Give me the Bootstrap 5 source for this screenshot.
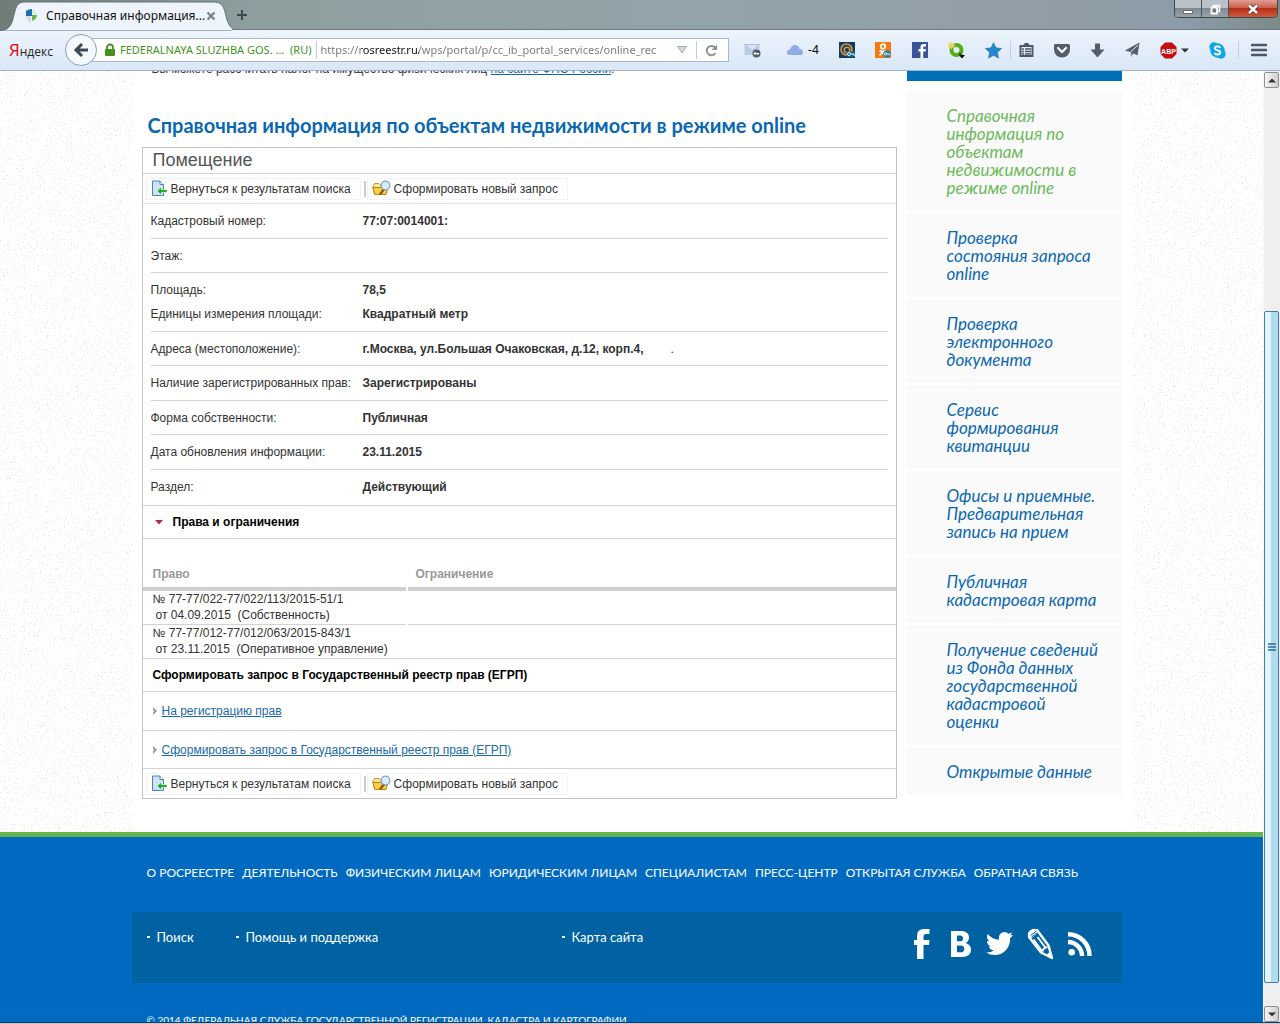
<!DOCTYPE html>
<html lang="ru">
<head>
<meta charset="utf-8">
<meta name="viewport" content="width=device-width, initial-scale=1">
<title>Справочная информация по объектам недвижимости в режиме online</title>
<link rel="stylesheet" href="https://cdn.jsdelivr.net/npm/bootstrap@5.3.0/dist/css/bootstrap.min.css">
<style>
:root{--ui:"Noto Sans","Open Sans",sans-serif;--site:Lato,"Open Sans",sans-serif;--line:#d3d3d3;--blue:#0b68b0}
body{font:12px/16px "Liberation Sans",Arial,sans-serif;color:#333;height:100vh;overflow:hidden;background:#fff}
button{font:inherit}
svg{display:block;flex:none}
.icon-btn{border:0;background:none;padding:0;color:#4d5a66}
/* browser frame */
.tabstrip{height:30px;background:linear-gradient(90deg,#6f7d78 0,#8f9f9f 20%,#93a3aa 55%,#929ea5 80%,#8b9ba8 93%,#7b8b86);border-bottom:1px solid #6b7b84;font-family:var(--ui);position:relative}
.tab-title{color:#111;font-size:12px}
.tab-shape{position:absolute;left:0;top:0}
.tab-body{position:relative;padding-left:24px;width:228px;padding-top:2px}
.tab-body .icon-btn{margin-left:1px}
.winbtns{height:18px;width:104px;border:1px solid #3f464c;border-top:0;border-radius:0 0 5px 5px;overflow:hidden;margin-right:2px}
.winbtns button{border:0;padding:0;flex:0 0 27px;background:linear-gradient(#b9c2c8 0 45%,#7e8a92 50%,#98a3aa);border-right:1px solid #4b5359;display:flex;align-items:center;justify-content:center}
.winbtns .win-close{flex:1 1 auto;border:0;background:linear-gradient(#e0a096 0,#cc5f4c 45%,#b52f18 50%,#d0593c)}
.toolbar{height:41px;background:linear-gradient(#edf4fc,#d9e7f7);border-bottom:1px solid #9db1c9;font-family:var(--ui);padding-right:13px}
.ya{width:56px;margin-left:9px}
.backbtn{width:32px;height:32px;border-radius:50%;border:1px solid #8d9fb7;background:#f5f9fd;padding:0;display:flex;align-items:center;justify-content:center;position:relative;z-index:1}
.urlbar{flex:0 0 647px;height:24px;border:1px solid #a9bace;background:#fff;margin-left:-15px;padding-left:21px;padding-right:10px}
.urlbar .site-id{color:#45931f;font-size:11px;white-space:nowrap}
.urlbar input{border:0;padding:0;outline:0;font:11px/20px var(--ui);min-width:0;flex:1 1 0;color:transparent;background:linear-gradient(90deg,#777 0 40px,#111 40px 98px,#777 98px);-webkit-background-clip:text;background-clip:text}
.vsep{width:1px;height:18px;background:#c3ced9}
.tools{flex:1 1 auto;padding-left:15px}
.tools .menu-group{margin-left:-8px}
/* page area */
.page{overflow:hidden;position:relative;background:#fff}
.grain{position:absolute;left:0;top:0;width:100%;height:100%}
.sheet{max-width:1000px;width:100%;background:#fff;margin:0 auto;padding:0 10px 33px;position:relative}
.intro{margin:-10px 0 0;padding-left:10px}
.intro a,.rq a{color:#1b6aa8}
.main-col{min-width:0;flex:1 1 auto}
h1{font:bold 20px/26px var(--site);color:var(--blue);margin:32px 0 0;padding:3px 0 9px 6px}
.panel{border:1px solid #c3c3c3;background:#fff}
.panel h2{font-size:18px;line-height:25px;color:#555;margin:0;padding-left:10px;border-bottom:1px solid var(--line)}
.acts{height:29px;padding-left:3px}
.acts button{height:22px;border:1px solid #f3f3f3;background:#fff;padding:0 9px 0 4px;display:flex;align-items:center;gap:3px;color:#333}
.acts .bar{width:2px;height:16px;background:#ccc;margin:0 1px 0 3px}
.fields{margin:0;padding:0 8px;border-bottom:1px solid var(--line)}
.fields>div{padding:9px 0;border-bottom:1px solid var(--line)}
.fields>div:nth-child(even){padding-bottom:8px}
.fields>div:last-child{border-bottom:0;padding-bottom:10px}
.fields dl{margin:0;display:grid;grid-template-columns:212px 1fr;row-gap:8px}
.fields dt{font-weight:400;white-space:nowrap}
.fields dd{font-weight:700;margin:0}
.fields .gap-dot{font-weight:400;margin-left:27px}
.hd{height:33px;border-bottom:1px solid var(--line);color:#000;font-weight:700;font-size:12px;margin:0;padding-left:10px;line-height:16px}
.hd svg{margin:0 10px 0 2px}
.rights{width:100%;border-collapse:separate;border-spacing:0;table-layout:fixed}
.rights th,.rights td{padding:0 10px 1px;border-bottom:1px solid var(--line);position:relative}
.rights th{padding:27px 8px 5px 10px;border-bottom:4px solid #d0d0d0;color:#999}
.rights th+th,.rights td+td{padding-left:8px}
.rights th:first-child{width:265px}
.rights tr>*:first-child::after{content:"";position:absolute;right:0;bottom:-4px;width:2px;height:4px;background:#fff}
.rights td:first-child::after{bottom:-1px;height:1px}
.rights tr:last-child td::after{display:none}
.rights .sub{padding-left:3px;white-space:pre}
.rq{height:39px;border-bottom:1px solid var(--line);padding-left:9px}
.rq+.rq{height:38px}
/* side menu */
.side{flex:0 0 215px;margin-left:10px}
.side .cap{height:10px;background:#0070b8;margin-bottom:10px}
.side ul{gap:2px}
.side li{background:#fafafa;padding:16px 10px 14px 40px;font:italic 17px/18px var(--site)}
.side a{color:var(--blue);text-decoration:none}
.side a.cur{color:#6cb95c}
/* footer */
.foot{background:#006ac1;border-top:5px solid #66b54c;position:relative;color:#fff;font:13px/18px var(--site);height:300px}
.foot .inner{max-width:1000px;margin:0 auto;padding-right:10px}
.foot a{color:#fff;text-decoration:none}
.foot nav{gap:8px;padding:27px 15px 30px;white-space:nowrap;font-size:12px}
.sub-box{background:#0062a3;height:71px;padding:16px 30px 0 15px}
.sub-box a.dot::before{content:"";display:inline-block;width:3px;height:2px;background:#fff;margin-right:7px;vertical-align:4px}
.w-a{width:89px}.w-b{width:326px}
.social{gap:14px}
.social a:first-child{margin-right:6px}
.copy{font-size:10px;line-height:16px;padding:29px 15px 0;margin:0}
/* scroll bar */
.sbar{flex:0 0 17px;background:#efefef;border-left:1px solid #f8f8f8;padding:1px 1px 0 0}
.sbar button{height:16px;border:1px solid #8f8f8f;border-radius:2px;background:linear-gradient(90deg,#f6f6f6,#cfcfcf);padding:0;display:flex;align-items:center;justify-content:center}
.sbar .thumb{flex:672 0 0;border:1px solid #3f7ea5;border-radius:2px;background:linear-gradient(90deg,#e3f4fc 0 45%,#a9dbf5 50%,#b8dcf0);display:flex;align-items:center;justify-content:center}
.winfoot{height:2px;background:#b9cbe0;border-top:1px solid #24374d}
</style>
</head>
<body class="d-flex flex-column">
<header class="flex-shrink-0">
  <div class="tabstrip d-flex">
    <svg class="tab-shape" width="232" height="31" viewBox="0 0 232 31"><path d="M0 30.500C12 30 12 22 15 11C17 4 19 2 26 2H213C221 2 223 5 225 12C228 24 229 29.500 240 30.500V31H0Z" fill="#edf4fc" stroke="#65737b"/></svg>
    <div class="tab-body d-flex align-items-center">
      <svg width="14" height="16" viewBox="0 0 14 16"><path d="M2 8V3Q4 1 8 1V8Z" fill="#1a6fb0"/><path d="M8 1Q12 2 13 6L8 7Z" fill="#dfe8ea"/><path d="M8 7H13Q13 11 8 13Z" fill="#6cb644"/><path d="M2 8H7V15Q3 14 2 8Z" fill="#d6dfe0"/></svg>
      <span class="tab-title ms-2 text-nowrap">Справочная информация...</span>
      <button class="icon-btn" aria-label="Закрыть вкладку"><svg width="10" height="10" viewBox="0 0 10 10"><path d="M1.500 1.500L8.500 8.500M8.500 1.500L1.500 8.500" stroke="#7b858d" stroke-width="2.400"/></svg></button>
    </div>
    <button class="icon-btn ms-2" aria-label="Новая вкладка"><svg width="12" height="12" viewBox="0 0 12 12"><path d="M6 1V11M1 6H11" stroke="#3e484e" stroke-width="2"/></svg></button>
    <div class="winbtns d-flex ms-auto">
      <button aria-label="Свернуть"><svg width="12" height="12"><path d="M1.500 7.500H10.500V10.500H1.500Z" fill="#fff" stroke="#555" stroke-width=".8"/></svg></button>
      <button aria-label="Развернуть"><svg width="12" height="12"><path d="M4.500 2.500H10.500V8.500H4.500Z" fill="none" stroke="#fff" stroke-width="1.500"/><path d="M2.500 4.500H8V10.500H2.500Z" fill="#777" stroke="#fff" stroke-width="1.800"/></svg></button>
      <button class="win-close" aria-label="Закрыть"><svg width="12" height="12"><path d="M2 2.500L10 10M10 2.500L2 10" stroke="#533" stroke-width="3.800"/><path d="M2 2.500L10 10M10 2.500L2 10" stroke="#fff" stroke-width="2.400"/></svg></button>
    </div>
  </div>
  <div class="toolbar d-flex align-items-center">
    <a class="ya" href="#"><svg width="46" height="22" viewBox="0 0 46 22" role="img" aria-label="Яндекс"><text x="0" y="17" font-family="Open Sans" font-size="12"><tspan fill="#e00" font-size="17">Я</tspan><tspan fill="#222">ндекс</tspan></text></svg></a>
    <button class="backbtn" aria-label="Назад"><svg width="16" height="16" viewBox="0 0 16 16"><path d="M15 8H4M9 2L3 8L9 14" fill="none" stroke="#3d4852" stroke-width="3"/></svg></button>
    <div class="urlbar d-flex align-items-center">
      <svg width="12" height="14" viewBox="0 0 12 14"><path d="M3 7V4.500a3 3 0 0 1 6 0V7" fill="none" stroke="#45931f" stroke-width="1.800"/><rect x="1" y="6" width="10" height="7" rx="1" fill="#45931f"/></svg>
      <label for="url" class="site-id ms-1">FEDERALNAYA SLUZHBA GOS. ...&nbsp; (RU)</label>
      <span class="vsep ms-1 me-1"></span>
      <input id="url" value="https://rosreestr.ru/wps/portal/p/cc_ib_portal_services/online_rec">
      <svg class="ms-2" width="12" height="10" viewBox="0 0 12 10"><path d="M1.500 1.500H10.500L6 8Z" fill="#d5dae2" stroke="#a8afba"/></svg>
      <span class="vsep ms-2 me-2"></span>
      <button class="icon-btn" aria-label="Обновить"><svg width="13" height="13" viewBox="0 0 13 13"><path d="M10.500 9A4.700 4.700 0 1 1 10 3.500" fill="none" stroke="#8a929b" stroke-width="2"/><path d="M12 .5V6H6.500Z" fill="#8a929b"/></svg></button>
    </div>
    <div class="tools d-flex align-items-center justify-content-between">
      <button class="icon-btn" aria-label="Почта"><svg width="18" height="16" viewBox="0 0 18 16"><path d="M.5 2.500H15.500V13H.5Z" fill="#bccbe8"/><path d="M.5 2.500L8 9L15.500 2.500Z" fill="#d7e1f3" stroke="#a7b6d4" stroke-width=".7"/><circle cx="12.500" cy="11.500" r="4" fill="#555d68"/><path d="M10 11.500H15M14 11.500V13" stroke="#fff"/><circle cx="11" cy="11.500" r="1.200" fill="#fff"/></svg></button>
      <button class="icon-btn d-flex align-items-center gap-1 text-black ms-1" aria-label="Погода"><svg width="18" height="12" viewBox="0 0 18 12"><path d="M3 11Q.5 10 .8 7.500Q1.500 5.500 4 5.500Q5.500 1 9 1Q13 1 13.500 5Q17 5 17 8.500Q16.500 11 15 11Z" fill="#91abea"/></svg>-4</button>
      <button class="icon-btn" aria-label="Сервис"><svg width="16" height="16" viewBox="0 0 16 16"><rect width="16" height="16" fill="#123a68"/><circle cx="7.500" cy="7.500" r="5.500" fill="none" stroke="#d79d3c" stroke-width="1.600"/><circle cx="8" cy="8" r="2.800" fill="none" stroke="#d79d3c" stroke-width="1.500"/><path d="M8 9.500H16V15H8Z" fill="#17607a"/><circle cx="10" cy="12" r="1.500" fill="none" stroke="#cff"/><path d="M11.500 12H15V14" fill="none" stroke="#cff"/></svg></button>
      <button class="icon-btn" aria-label="Одноклассники"><svg width="17" height="16" viewBox="0 0 17 16"><rect width="16" height="16" fill="#f37a12"/><circle cx="8" cy="4.500" r="2.300" fill="none" stroke="#fff" stroke-width="1.700"/><path d="M4.500 8.500Q8 10.500 11 8.500M7.500 10L4.500 13.500M7.500 10L11 13" fill="none" stroke="#fff" stroke-width="1.700"/><circle cx="12" cy="12" r="3.800" fill="#2e8299"/><circle cx="10.500" cy="12" r="1.200" fill="none" stroke="#fff" stroke-width=".8"/><path d="M11.500 12H14.500V13.500" fill="none" stroke="#fff" stroke-width=".8"/></svg></button>
      <button class="icon-btn" aria-label="Facebook"><svg width="16" height="16" viewBox="0 0 16 16"><rect width="16" height="16" fill="#3b5499"/><path d="M8.500 16V9.500H6.500V7H8.500V5Q8.500 2 11.500 2H14V4.500H12.300Q11.200 4.500 11.200 5.600V7H14L13.600 9.500H11.200V16Z" fill="#fff"/></svg></button>
      <button class="icon-btn" aria-label="Поиск"><svg width="17" height="17" viewBox="0 0 17 17"><circle cx="8.500" cy="8" r="5" fill="none" stroke="#55ad16" stroke-width="4"/><path d="M11 11L15 15" stroke="#316d10" stroke-width="2.500"/><path d="M3.500 0V7M0 3.500H7M1 1L6 6M6 1L1 6" stroke="#e6d36a" stroke-width="1.300"/><path d="M11 13H17L14 16.500Z" fill="#111"/></svg></button>
      <div class="d-flex align-items-center gap-2">
      <button class="icon-btn" aria-label="Закладка"><svg width="17" height="17" viewBox="0 0 18 18"><path d="M9 .8L11.500 6.200L17.500 6.900L13 11L14.300 17L9 14L3.700 17L5 11L.5 6.900L6.500 6.200Z" fill="#2188c9" stroke="#1a70ac" stroke-width=".7"/></svg></button>
      <span class="vsep"></span>
      <button class="icon-btn" aria-label="Закладки"><svg width="15" height="16" viewBox="0 0 15 16"><path d="M1.500 4H13.500V14H1.500Z" fill="none" stroke="#4d5a66" stroke-width="2"/><path d="M4.500 3L6 1H9L10.500 3Z" fill="#4d5a66"/><path d="M3 7H5M6 7H12M3 9.500H5M6 9.500H12M3 12H5M6 12H12" stroke="#4d5a66" stroke-width="1.300"/></svg></button>
      </div>
      <button class="icon-btn" aria-label="Pocket"><svg width="16" height="15" viewBox="0 0 16 15"><path d="M1.500 1H14.500Q16 1 16 2.500V6.500A8 8 0 0 1 0 6.500V2.500Q0 1 1.500 1Z" fill="#535e69"/><path d="M4 5L8 9L12 5" fill="none" stroke="#fff" stroke-width="2.200" stroke-linecap="round"/></svg></button>
      <button class="icon-btn" aria-label="Загрузки"><svg width="15" height="15" viewBox="0 0 15 15"><path d="M5 .5H10V6.500H14.500L7.500 14.500L.5 6.500H5Z" fill="#535e69"/></svg></button>
      <button class="icon-btn" aria-label="Отправить"><svg width="15" height="16" viewBox="0 0 15 16"><path d="M14.500.5L12.500 13.500L8.300 11.300L6 15L5.300 10L0 8.500Z" fill="#535e69"/><path d="M13 3L5.500 10L6 14" fill="none" stroke="#e6eff9"/></svg></button>
      <button class="icon-btn d-flex align-items-center gap-1" aria-label="Adblock Plus"><svg width="17" height="17" viewBox="0 0 17 17"><path d="M5 .5H12L16.500 5V12L12 16.500H5L.5 12V5Z" fill="#c70d0d"/><text x="8.500" y="11.500" font-family="Liberation Sans" font-size="7" font-weight="bold" fill="#fff" text-anchor="middle">ABP</text></svg><svg width="8" height="5"><path d="M0 .5H8L4 4.500Z" fill="#333"/></svg></button>
      <button class="icon-btn" aria-label="Skype"><svg width="17" height="17" viewBox="0 0 17 17"><circle cx="5" cy="5" r="4.700" fill="#12a5e8"/><circle cx="12" cy="12" r="4.700" fill="#12a5e8"/><circle cx="8.500" cy="8.500" r="7.200" fill="#12a5e8"/><path d="M11.300 5.800Q10.500 4.300 8.400 4.400Q5.900 4.600 6 6.300Q6.200 7.700 8.500 8.200Q11.400 8.800 11.200 10.700Q10.800 12.500 8.600 12.500Q6.300 12.500 5.600 10.800" fill="none" stroke="#fff" stroke-width="1.900"/></svg></button>
      <div class="menu-group d-flex align-items-center gap-2">
      <span class="vsep me-1"></span>
      <button class="icon-btn" aria-label="Меню"><svg width="16" height="14" viewBox="0 0 16 14"><path d="M1 2H15M1 7H15M1 12H15" stroke="#4d5963" stroke-width="2.600" stroke-linecap="round"/></svg></button>
      </div>
    </div>
  </div>
</header>

<div class="d-flex flex-grow-1 overflow-hidden">
  <div class="page flex-grow-1">
    <svg class="grain" aria-hidden="true"><filter id="g" x="0" y="0" width="100%" height="100%"><feTurbulence type="fractalNoise" baseFrequency=".7" numOctaves="2" seed="4"/><feColorMatrix values="0 0 0 0 .8  0 0 0 0 .8  0 0 0 0 .82  6 0 0 0 -3.600"/></filter><rect width="100%" height="100%" filter="url(#g)"/></svg>
    <div class="sheet d-flex align-items-start">
      <main class="main-col">
        <p class="intro">Вы можете рассчитать налог на имущество физических лиц <a href="#">на сайте ФНС России</a>.</p>
        <h1>Справочная информация по объектам недвижимости в режиме online</h1>
        <section class="panel">
          <h2>Помещение</h2>
          <div class="acts d-flex align-items-center">
            <button type="button"><svg width="17" height="17" viewBox="0 0 17 17"><path d="M1.500 1H9L12.500 4.500V15.500H1.500Z" fill="#cfe3f8" stroke="#4f7fb8"/><path d="M9 1V4.500H12.500" fill="#fff" stroke="#4f7fb8"/><path d="M6 11L10.500 6.800V9.500H16V12.500H10.500V15.200Z" fill="#1fae2b" stroke="#fff" stroke-width=".6"/></svg>Вернуться к результатам поиска</button>
            <span class="bar"></span>
            <button type="button"><svg width="19" height="17" viewBox="0 0 19 17"><path d="M.8 7L2.500 3.500H7L8.500 5H14V14H2.500Z" fill="#fbe79a" stroke="#c79a2a"/><path d="M.8 7.500H10L15.500 9L14 14.500H3Z" fill="#fbcf45" stroke="#b98512"/><path d="M8 14.500L12 9" stroke="#8b5a10" stroke-width="2.400"/><circle cx="13.500" cy="5.500" r="4.300" fill="#d8ecff" stroke="#7ea3cc" stroke-width="1.300"/></svg>Сформировать новый запрос</button>
          </div>
          <div class="fields border-top">
            <div><dl><dt>Кадастровый номер:</dt><dd>77:07:0014001:</dd></dl></div>
            <div><dl><dt>Этаж:</dt><dd></dd></dl></div>
            <div><dl><dt>Площадь:</dt><dd>78,5</dd><dt>Единицы измерения площади:</dt><dd>Квадратный метр</dd></dl></div>
            <div><dl><dt>Адреса (местоположение):</dt><dd>г.Москва, ул.Большая Очаковская, д.12, корп.4,<span class="gap-dot">.</span></dd></dl></div>
            <div><dl><dt>Наличие зарегистрированных прав:</dt><dd>Зарегистрированы</dd></dl></div>
            <div><dl><dt>Форма собственности:</dt><dd>Публичная</dd></dl></div>
            <div><dl><dt>Дата обновления информации:</dt><dd>23.11.2015</dd></dl></div>
            <div><dl><dt>Раздел:</dt><dd>Действующий</dd></dl></div>
          </div>
          <h3 class="hd d-flex align-items-center"><svg width="8" height="5" viewBox="0 0 8 5"><path d="M0 0H8L4 4.500Z" fill="#b0293f"/></svg>Права и ограничения</h3>
          <table class="rights">
            <thead><tr><th>Право</th><th>Ограничение</th></tr></thead>
            <tbody>
              <tr><td>№ 77-77/022-77/022/113/2015-51/1<br><span class="sub">от 04.09.2015  (Собственность)</span></td><td></td></tr>
              <tr><td>№ 77-77/012-77/012/063/2015-843/1<br><span class="sub">от 23.11.2015  (Оперативное управление)</span></td><td></td></tr>
            </tbody>
          </table>
          <h3 class="hd d-flex align-items-center">Сформировать запрос в Государственный реестр прав (ЕГРП)</h3>
          <div class="rq d-flex align-items-center"><svg class="me-1" width="6" height="8" viewBox="0 0 6 8"><path d="M1 0L5 4L1 8V5.500L2 4L1 2.500Z" fill="#999"/></svg><a href="#">На регистрацию прав</a></div>
          <div class="rq d-flex align-items-center"><svg class="me-1" width="6" height="8" viewBox="0 0 6 8"><path d="M1 0L5 4L1 8V5.500L2 4L1 2.500Z" fill="#999"/></svg><a href="#">Сформировать запрос в Государственный реестр прав (ЕГРП)</a></div>
          <div class="acts d-flex align-items-center">
            <button type="button"><svg width="17" height="17" viewBox="0 0 17 17"><path d="M1.500 1H9L12.500 4.500V15.500H1.500Z" fill="#cfe3f8" stroke="#4f7fb8"/><path d="M9 1V4.500H12.500" fill="#fff" stroke="#4f7fb8"/><path d="M6 11L10.500 6.800V9.500H16V12.500H10.500V15.200Z" fill="#1fae2b" stroke="#fff" stroke-width=".6"/></svg>Вернуться к результатам поиска</button>
            <span class="bar"></span>
            <button type="button"><svg width="19" height="17" viewBox="0 0 19 17"><path d="M.8 7L2.500 3.500H7L8.500 5H14V14H2.500Z" fill="#fbe79a" stroke="#c79a2a"/><path d="M.8 7.500H10L15.500 9L14 14.500H3Z" fill="#fbcf45" stroke="#b98512"/><path d="M8 14.500L12 9" stroke="#8b5a10" stroke-width="2.400"/><circle cx="13.500" cy="5.500" r="4.300" fill="#d8ecff" stroke="#7ea3cc" stroke-width="1.300"/></svg>Сформировать новый запрос</button>
          </div>
        </section>
      </main>
      <aside class="side">
        <div class="cap"></div>
        <ul class="list-unstyled d-flex flex-column mb-0">
          <li><a class="cur" href="#">Справочная<br>информация по<br>объектам<br>недвижимости в<br>режиме online</a></li>
          <li><a href="#">Проверка<br>состояния запроса<br>online</a></li>
          <li><a href="#">Проверка<br>электронного<br>документа</a></li>
          <li><a href="#">Сервис<br>формирования<br>квитанции</a></li>
          <li><a href="#">Офисы и приемные.<br>Предварительная<br>запись на прием</a></li>
          <li><a href="#">Публичная<br>кадастровая карта</a></li>
          <li><a href="#">Получение сведений<br>из Фонда данных<br>государственной<br>кадастровой<br>оценки</a></li>
          <li><a href="#">Открытые данные</a></li>
        </ul>
      </aside>
    </div>
    <footer class="foot">
      <div class="inner">
        <nav class="d-flex"><a href="#">О РОСРЕЕСТРЕ</a><a href="#">ДЕЯТЕЛЬНОСТЬ</a><a href="#">ФИЗИЧЕСКИМ ЛИЦАМ</a><a href="#">ЮРИДИЧЕСКИМ ЛИЦАМ</a><a href="#">СПЕЦИАЛИСТАМ</a><a href="#">ПРЕСС-ЦЕНТР</a><a href="#">ОТКРЫТАЯ СЛУЖБА</a><a href="#">ОБРАТНАЯ СВЯЗЬ</a></nav>
        <div class="sub-box d-flex align-items-start">
          <a class="dot w-a" href="#">Поиск</a><a class="dot w-b" href="#">Помощь и поддержка</a><a class="dot" href="#">Карта сайта</a>
          <div class="d-flex align-items-center ms-auto social">
            <a href="#" aria-label="Facebook"><svg width="16" height="30" viewBox="0 0 16 30"><path d="M3 30V16H0V11H3V7Q3 0 10 0H15.500V5H12Q9.500 5 9.500 7.500V11H15.500L15 16H9.500V30Z" fill="#fff"/></svg></a>
            <a href="#" aria-label="ВКонтакте"><svg width="22" height="26" viewBox="0 0 22 26"><path fill-rule="evenodd" d="M1 0H11.500Q19 .5 19 6.500Q19 10.500 15.500 12Q21 13.500 21 18.500Q21 26 12 26H1ZM7 4.500V10.300H10Q13 10.300 13 7.400Q13 4.500 10 4.500ZM7 14.500V21.300H10.500Q14.300 21.300 14.300 17.900Q14.300 14.500 10.500 14.500Z" fill="#fff"/></svg></a>
            <a href="#" aria-label="Twitter"><svg width="27" height="24" viewBox="0 0 27 24"><path d="M27 3Q26 5 24 6.300Q24.500 14 19 19Q15 23 9 23Q4 23 0 20.500Q4.500 21 8 18.300Q4 18 2.800 14.500H5Q1 13 1 9L3.300 9.500Q-.2 6.500 1.700 2Q6.500 7.500 13 7.700Q12 1 18 0Q21 0 22.500 1.700L26 .5Q25.500 2.300 24 3.500Z" fill="#fff"/></svg></a>
            <a href="#" aria-label="Блог"><svg width="27" height="32" viewBox="0 0 27 32"><path d="M2 9L10 2L21.500 17.500L25 30L14 24.500Z" fill="none" stroke="#fff" stroke-width="2.400" stroke-linejoin="round"/><path d="M1.500 9Q-.5 5 3 2.500Q6.500-.8 10.500 2L12 4L3.500 11Z" fill="#fff"/><path d="M6.500 11.500L15.500 23.500M10.500 9L19 20.500M15.500 23.500Q16 20 20.500 19" fill="none" stroke="#fff" stroke-width="1.800"/><path d="M25 30L19 27L23.500 23.500Z" fill="#fff"/><path d="M3.500 7.500L9.500 3M4.500 9L10.500 4.600" stroke="#0062a3"/></svg></a>
            <a href="#" aria-label="RSS"><svg width="24" height="24" viewBox="0 0 24 24"><circle cx="3.700" cy="20.300" r="3.300" fill="#fff"/><path d="M0 10A14 14 0 0 1 14 24M0 2.200A21.500 21.500 0 0 1 21.500 24" fill="none" stroke="#fff" stroke-width="4.400"/></svg></a>
          </div>
        </div>
        <p class="copy">© 2014 ФЕДЕРАЛЬНАЯ СЛУЖБА ГОСУДАРСТВЕННОЙ РЕГИСТРАЦИИ, КАДАСТРА И КАРТОГРАФИИ</p>
      </div>
    </footer>
  </div>
  <div class="sbar d-flex flex-column">
    <button aria-label="Вверх"><svg width="8" height="5"><path d="M0 4.500L4 .5L8 4.500Z" fill="#333"/></svg></button>
    <div style="flex:223 0 0"></div>
    <div class="thumb"><svg width="8" height="8"><path d="M0 1H8M0 4H8M0 7H8" stroke="#2f6d94" stroke-width="1.500"/></svg></div>
    <div style="flex:23 0 0"></div>
    <button aria-label="Вниз"><svg width="8" height="5"><path d="M0 .5L4 4.500L8 .5Z" fill="#333"/></svg></button>
  </div>
</div>
<div class="winfoot flex-shrink-0"></div>
<script src="https://cdn.jsdelivr.net/npm/bootstrap@5.3.0/dist/js/bootstrap.bundle.min.js"></script>
</body>
</html>
